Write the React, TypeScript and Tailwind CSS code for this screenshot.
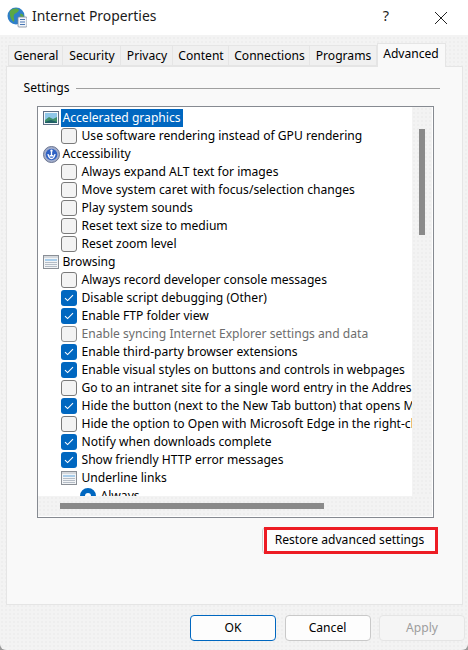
import type { ReactNode } from "react";

const dotted = "bg-[#f3f3f3] bg-[radial-gradient(#eeeeee_1px,transparent_1px)] bg-[length:4px_4px]";

type Row =
  | { kind: "head"; label: string; icon: ReactNode; selected?: boolean }
  | { kind: "check"; label: string; checked?: boolean; disabled?: boolean }
  | { kind: "sub"; label: string }
  | { kind: "radio"; label: string };

function PictureIcon() {
  return (
    <svg width="16" height="14" viewBox="0 0 16 14" className="shrink-0">
      <rect x="0.5" y="0.5" width="15" height="13" fill="#f4f7fb" stroke="#5f6f86" />
      <rect x="2" y="2" width="12" height="10" fill="#8fc7e8" />
      <path d="M2 9 L6 6 L10 8 L14 6 V12 H2 Z" fill="#3f8f6a" />
      <path d="M2 11 L8 9 L14 11 V12 H2 Z" fill="#1f5f66" />
    </svg>
  );
}

function AccessIcon() {
  return (
    <svg width="17" height="17" viewBox="0 0 17 17" className="shrink-0">
      <circle cx="8.5" cy="8.5" r="8" fill="#a3aecb" stroke="#6b7590" />
      <circle cx="8.5" cy="8.5" r="5.8" fill="#2f62c4" />
      <circle cx="8.5" cy="4.8" r="1.2" fill="#fff" />
      <path d="M8.5 6 V9.5 M5 8 C5.5 11 7 12.5 8.5 12.5 C10 12.5 11.5 11 12 8 M6.5 10 L8.5 9.5 L10.5 10" fill="none" stroke="#fff" strokeWidth="1.3" />
    </svg>
  );
}

function FolderListIcon() {
  return (
    <svg width="16" height="14" viewBox="0 0 16 14" className="shrink-0">
      <rect x="0.5" y="0.5" width="15" height="13" fill="#f2f4f6" stroke="#8a8f96" />
      <rect x="1" y="1" width="14" height="2" fill="#d4d8dd" />
      <rect x="2" y="4" width="12" height="2" fill="#a9cdea" />
      <path d="M2 7.5 H14 M2 9.5 H14 M2 11.5 H14" stroke="#b4bcc6" />
    </svg>
  );
}

function CheckBox({ checked, disabled }: { checked?: boolean; disabled?: boolean }) {
  if (checked) {
    return (
      <span className="flex size-4 shrink-0 items-center justify-center rounded-[3px] bg-[#0067c0]">
        <svg width="10" height="8" viewBox="0 0 10 8">
          <path d="M1 4.2 L3.6 6.6 L9 1.2" fill="none" stroke="#fff" strokeWidth="1.1" />
        </svg>
      </span>
    );
  }
  return <span className={`size-4 shrink-0 rounded-[3px] border bg-[#f3f3f3] ${disabled ? "border-[#8f8f8f]" : "border-[#7a7a7a]"}`} />;
}

const rows: Row[] = [
  { kind: "head", label: "Accelerated graphics", icon: <PictureIcon />, selected: true },
  { kind: "check", label: "Use software rendering instead of GPU rendering" },
  { kind: "head", label: "Accessibility", icon: <AccessIcon /> },
  { kind: "check", label: "Always expand ALT text for images" },
  { kind: "check", label: "Move system caret with focus/selection changes" },
  { kind: "check", label: "Play system sounds" },
  { kind: "check", label: "Reset text size to medium" },
  { kind: "check", label: "Reset zoom level" },
  { kind: "head", label: "Browsing", icon: <FolderListIcon /> },
  { kind: "check", label: "Always record developer console messages" },
  { kind: "check", label: "Disable script debugging (Other)", checked: true },
  { kind: "check", label: "Enable FTP folder view", checked: true },
  { kind: "check", label: "Enable syncing Internet Explorer settings and data", disabled: true },
  { kind: "check", label: "Enable third-party browser extensions", checked: true },
  { kind: "check", label: "Enable visual styles on buttons and controls in webpages", checked: true },
  { kind: "check", label: "Go to an intranet site for a single word entry in the Address bar" },
  { kind: "check", label: "Hide the button (next to the New Tab button) that opens Microsoft Edge", checked: true },
  { kind: "check", label: "Hide the option to Open with Microsoft Edge in the right-click menu" },
  { kind: "check", label: "Notify when downloads complete", checked: true },
  { kind: "check", label: "Show friendly HTTP error messages", checked: true },
  { kind: "sub", label: "Underline links" },
  { kind: "radio", label: "Always" },
];

function SettingRow({ row }: { row: Row }) {
  if (row.kind === "head") {
    return (
      <div className="flex h-[18px] items-center pl-[5px]">
        <span className="flex w-[18px] shrink-0 items-center">{row.icon}</span>
        <span className={`px-[2px] leading-[18px] ${row.selected ? "bg-[#0067c0] text-white" : ""}`}>{row.label}</span>
      </div>
    );
  }
  if (row.kind === "check") {
    return (
      <div className="flex h-[18px] items-center gap-[5px] pl-[23px]">
        <CheckBox checked={row.checked} disabled={row.disabled} />
        <span className={`whitespace-nowrap ${row.disabled ? "text-[#6d6d6d]" : ""}`}>{row.label}</span>
      </div>
    );
  }
  if (row.kind === "sub") {
    return (
      <div className="flex h-[18px] items-center gap-[5px] pl-[23px]">
        <span className="flex w-4 shrink-0">
          <FolderListIcon />
        </span>
        <span>{row.label}</span>
      </div>
    );
  }
  return (
    <div className="flex h-[18px] items-center gap-[5px] pl-[42px]">
      <span className="size-4 shrink-0 rounded-full border-[5px] border-[#0067c0] bg-white" />
      <span>{row.label}</span>
    </div>
  );
}

const tabs = [
  { label: "General", width: "w-[55px]" },
  { label: "Security", width: "w-[58px]" },
  { label: "Privacy", width: "w-[52px]" },
  { label: "Content", width: "w-[56px]" },
  { label: "Connections", width: "w-[81px]" },
  { label: "Programs", width: "w-[67px]" },
];

function DialogButton({ label, kind }: { label: string; kind?: "primary" | "disabled" }) {
  const look =
    kind === "primary"
      ? "border-[#0067c0] bg-[#fdfdfd]"
      : kind === "disabled"
        ? "border-[#e5e5e5] bg-[#f5f5f5] text-[#9d9d9d]"
        : "border-[#c9c9c9] bg-[#fdfdfd]";
  return <button type="button" className={`h-[26px] w-[86px] rounded-[4px] border pt-px ${look}`}>{label}</button>;
}

export default function App() {
  return (
    <div className="h-[650px] w-[468px] bg-[#9a9a9a]">
      <div className={`flex h-[650px] w-[468px] flex-col overflow-hidden rounded-b-[6px] font-['Noto_Sans',sans-serif] text-[12.1px] text-black ${dotted}`}>
        <header className="flex h-[35px] shrink-0 items-center bg-white pb-[3px] pl-[7px]">
          <svg width="20" height="21" viewBox="0 0 20 21" className="mt-[3px] shrink-0">
            <circle cx="9" cy="9" r="8.5" fill="#2f7fc9" />
            <path d="M3 4 C6 1 10 1 12 3 C11 6 8 6 7 8 C6 11 8 12 7 15 C4 13 2 8 3 4 Z" fill="#5aa845" />
            <path d="M13 7 C15 6 17 8 17 11 L14 11 Z" fill="#5aa845" />
            <rect x="11" y="10" width="9" height="10" rx="1" fill="#f1f4f8" stroke="#7f8b99" strokeWidth="0.8" />
            <path d="M13 12.5 H18 M13 15 H18 M13 17.5 H18" stroke="#4a78b5" />
          </svg>
          <span className="ml-[5px] text-[13.9px] text-[#1a1a1a]">Internet Properties</span>
          <span className="ml-auto text-[14.5px] text-[#222]">?</span>
          <svg width="14" height="14" viewBox="0 0 14 14" className="mt-[3px] mr-[20px] ml-[45px]">
            <path d="M1 1 L13 13 M13 1 L1 13" stroke="#222" strokeWidth="1" />
          </svg>
        </header>

        <div className="flex h-[31px] shrink-0 items-end pl-[7.5px]">
          {tabs.map((tab) => (
            <div key={tab.label} className={`flex h-[21px] items-center justify-center border-y border-r border-[#e5e5e5] bg-[#f0f0f0] pt-px pl-[2px] first:border-l ${tab.width}`}>
              {tab.label}
            </div>
          ))}
          <div className="relative z-10 -mb-px flex h-[24px] w-[69px] items-center justify-center border-x border-t border-[#e5e5e5] bg-[#f9f9f9] pb-[2px]">
            Advanced
          </div>
        </div>

        <main className="mx-[5.5px] flex h-[539px] shrink-0 flex-col border border-[#e5e5e5] bg-[#f9f9f9] pr-[22px] pl-[17px]">
          <div className="flex h-[39px] shrink-0 items-start gap-[6px] pt-[12px]">
            <span className="leading-[18px]">Settings</span>
            <span className="mt-[9px] h-px flex-1 bg-[#a0a0a0]" />
          </div>

          <div className="ml-[13px] flex h-[412px] w-[397px] shrink-0 flex-col border border-[#868a91] bg-white">
            <div className="flex min-h-0 flex-1">
              <div className="min-w-0 flex-1 overflow-hidden pt-[2px]">
                {rows.map((row) => (
                  <SettingRow key={row.label} row={row} />
                ))}
              </div>
              <div className={`mr-px w-[20px] shrink-0 pt-[22px] ${dotted}`}>
                <div className="mx-auto h-[106px] w-[6px] bg-[#8a8a8a]" />
              </div>
            </div>
            <div className={`mr-px mb-px flex h-[20px] shrink-0 items-center pl-[22px] ${dotted}`}>
              <div className="h-[6px] w-[264px] bg-[#8a8a8a]" />
            </div>
          </div>

          <div className="mt-[9px] mr-[2px] flex justify-end">
            <button type="button" className="relative h-[27px] w-[176px] rounded-[4px] border border-[#d0d0d0] bg-[#fdfdfd]">
              Restore advanced settings
              <span className="absolute -top-px right-[-1px] -bottom-px left-[1px] border-[3px] border-[#ed1c24]" />
            </button>
          </div>
        </main>

        <footer className="flex flex-1 items-start justify-end gap-[8.5px] pt-[10px] pr-[3px]">
          <DialogButton label="OK" kind="primary" />
          <DialogButton label="Cancel" />
          <DialogButton label="Apply" kind="disabled" />
        </footer>
      </div>
    </div>
  );
}
